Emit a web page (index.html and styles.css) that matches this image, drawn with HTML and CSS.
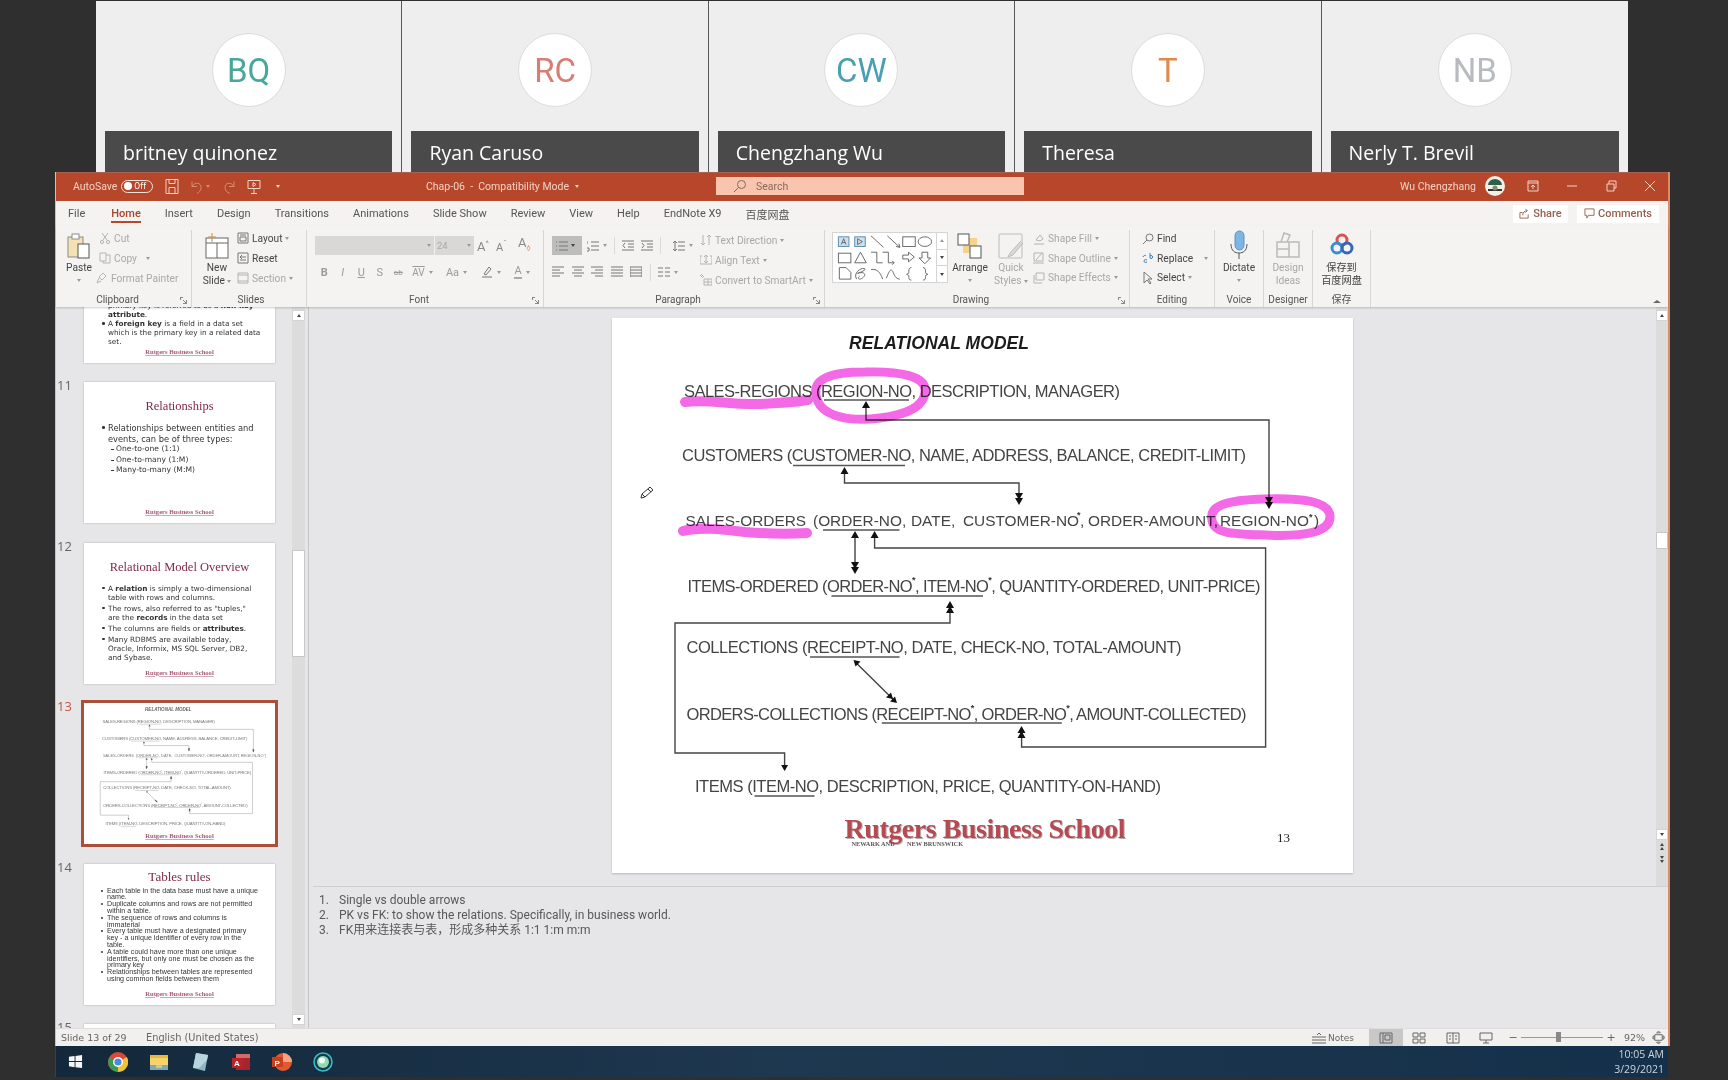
FILE: index.html
```html
<!DOCTYPE html>
<html lang="en">
<head>
    <meta charset="UTF-8">
    <meta name="viewport" content="width=device-width, initial-scale=1.0">
    <title>Chap-06 - Compatibility Mode</title>
    <link rel="stylesheet" href="styles.css">
</head>
<body>
    <!-- Meeting participants strip -->
    <div class="gallery">
        <div class="tile"><div class="avatar teal">BQ</div><div class="name-bar">britney quinonez</div></div>
        <div class="tile"><div class="avatar coral">RC</div><div class="name-bar">Ryan Caruso</div></div>
        <div class="tile"><div class="avatar blue">CW</div><div class="name-bar">Chengzhang Wu</div></div>
        <div class="tile"><div class="avatar orange">T</div><div class="name-bar">Theresa</div></div>
        <div class="tile"><div class="avatar grey">NB</div><div class="name-bar">Nerly T. Brevil</div></div>
    </div>

    <div class="window">
        <!-- Title bar -->
        <header class="titlebar">
            <div class="qat">
                <span class="autosave">AutoSave</span>
                <span class="toggle"><i></i>Off</span>
                <svg class="qat-icon save" viewBox="0 0 14 16"><path d="M1 1h12v14H1zM4 1v4h6V1M4 15V9h6v6"/></svg>
                <svg class="qat-icon dim" viewBox="0 0 14 16"><path d="M3 3v5h5M3 8c3-5 9-4 9 1 0 3-2 5-4 6"/></svg>
                <i class="caret dim-caret"></i>
                <svg class="qat-icon dim" viewBox="0 0 14 16"><path d="M11 3v5H6M11 8C8 3 2 4 2 9c0 3 2 5 5 6"/></svg>
                <svg class="qat-icon" viewBox="0 0 14 16"><path d="M1 2h12v8H1zM7 10v5M4 15h6M6 4l3 2-3 2z"/></svg>
                <i class="caret light-caret"></i>
            </div>
            <div class="doc-title">Chap-06 &nbsp;-&nbsp; Compatibility Mode <i class="caret light-caret"></i></div>
            <div class="search">
                <svg class="search-icon" viewBox="0 0 14 14"><circle cx="8.5" cy="5.5" r="4"/><path d="M5.5 8.5L1 13"/></svg>
                Search
            </div>
            <div class="title-right">
                <span class="user">Wu Chengzhang</span>
                <svg class="user-pic" viewBox="0 0 20 20"><circle cx="10" cy="10" r="10" fill="#f2efe6"/><path d="M3 9a7 6 0 0 1 14 0z" fill="#2e5f4c"/><path d="M3 13h14v2H3z" fill="#333"/><circle cx="10" cy="12" r="2.5" fill="#7d8c6c"/></svg>
                <svg class="win-btn first" viewBox="0 0 12 12"><path d="M1 1h10v10H1zM1 3h10M6 9V5M4 7l2-2 2 2"/></svg>
                <svg class="win-btn" viewBox="0 0 12 12"><path d="M1 6h10"/></svg>
                <svg class="win-btn" viewBox="0 0 12 12"><path d="M2 4h7v7H2zM4 4V1h7v7H9"/></svg>
                <svg class="win-btn" viewBox="0 0 12 12"><path d="M1 1l10 10M11 1L1 11"/></svg>
            </div>
        </header>

        <!-- Ribbon tabs -->
        <nav class="tabs">
            <span>File</span>
            <span class="active">Home</span>
            <span>Insert</span>
            <span>Design</span>
            <span>Transitions</span>
            <span>Animations</span>
            <span>Slide Show</span>
            <span>Review</span>
            <span>View</span>
            <span>Help</span>
            <span>EndNote X9</span>
            <span>百度网盘</span>
            <div class="tab-actions">
                <span class="tab-btn share"><svg viewBox="0 0 12 12"><path d="M1 5h3M1 5v6h9V7M4 8c0-3 2-5 5-5M7 1l2 2-2 2"/></svg>Share</span>
                <span class="tab-btn comments"><svg viewBox="0 0 12 12"><path d="M1 1h10v7H5L3 11V8H1z"/></svg>Comments</span>
            </div>
        </nav>

        <!-- Ribbon -->
        <div class="ribbon">
            <section class="group clipboard">
                <div class="group-body">
                    <div class="big-btn paste-btn">
                        <svg class="big-icon" viewBox="0 0 26 26"><rect x="2" y="4" width="15" height="20" fill="#f6e1b2" stroke="#8c8c8c"/><rect x="6" y="1" width="7" height="5" fill="#fff" stroke="#8c8c8c"/><rect x="12" y="11" width="11" height="14" fill="#fff" stroke="#555"/></svg>
                        <span>Paste</span>
                        <i class="caret"></i>
                    </div>
                    <div class="btn-col">
                        <div class="row-btn off"><svg class="sm-icon" viewBox="0 0 12 12"><path d="M3 1l5 7M9 1L4 8"/><circle cx="3" cy="10" r="1.6"/><circle cx="9" cy="10" r="1.6"/></svg>Cut</div>
                        <div class="row-btn off"><svg class="sm-icon" viewBox="0 0 12 12"><path d="M1 1h6v8H1zM4 9v2h7V3H7"/></svg>Copy <i class="caret caret-space"></i></div>
                        <div class="row-btn off painter"><svg class="sm-icon" viewBox="0 0 12 12"><path d="M7 1l3 3-4 4-3-3zM3 6l-2 5 4-2"/></svg>Format Painter</div>
                    </div>
                </div>
                <div class="group-label has-launcher">Clipboard <svg class="launcher" viewBox="0 0 7 7"><path d="M0 .5h3M.5 0v3M7 6.5H3M6.500 7V3M3 3l3 3"/></svg></div>
            </section>

            <section class="group slides">
                <div class="group-body">
                    <div class="big-btn new-slide">
                        <svg class="big-icon" viewBox="0 0 26 26"><rect x="2" y="5" width="22" height="20" fill="#fff" stroke="#666"/><path d="M2 10h22M13 10v15" fill="none" stroke="#666"/><path d="M8 0v9M4 4h8" stroke="#c98f3c" fill="none"/></svg>
                        <span>New</span>
                        <span>Slide <i class="caret"></i></span>
                    </div>
                    <div class="btn-col">
                        <div class="row-btn"><svg class="sm-icon" viewBox="0 0 12 12"><path d="M1 1h10v10H1zM3 3h6M3 5h6v4H3z"/></svg>Layout <i class="caret"></i></div>
                        <div class="row-btn"><svg class="sm-icon" viewBox="0 0 12 12"><path d="M1 1h10v10H1zM3 5h6M5 3L3 5l2 2M3 8h6"/></svg>Reset</div>
                        <div class="row-btn off"><svg class="sm-icon" viewBox="0 0 12 12"><path d="M1 1h10v10H1zM1 3h10M1 9h10"/></svg>Section <i class="caret"></i></div>
                    </div>
                </div>
                <div class="group-label slides-label">Slides</div>
            </section>

            <section class="group font">
                <div class="group-body stacked">
                    <div class="font-row">
                        <div class="font-box name-box"><i class="caret"></i></div>
                        <div class="font-box size-box">24<i class="caret"></i></div>
                        <span class="grow-btn">A<sup>^</sup></span>
                        <span class="grow-btn small">A<sup>ˇ</sup></span>
                        <span class="clear-btn">A<sub>◊</sub></span>
                    </div>
                    <div class="format-row">
                        <b class="fmt">B</b>
                        <i class="fmt">I</i>
                        <u class="fmt">U</u>
                        <span class="fmt">S</span>
                        <s class="fmt abc">ab</s>
                        <span class="fmt w30"><span class="av">AV</span><i class="caret"></i></span>
                        <span class="fmt w38">Aa <i class="caret"></i></span>
                        <span class="fmt w31"><svg class="sm-icon" viewBox="0 0 12 12"><path d="M3 8l5-7 2 2-5 6zM1 11h10"/></svg><i class="caret"></i></span>
                        <span class="fmt w31"><span class="a-under">A</span><i class="caret"></i></span>
                    </div>
                </div>
                <div class="group-label has-launcher">Font <svg class="launcher" viewBox="0 0 7 7"><path d="M0 .5h3M.5 0v3M7 6.500H3M6.500 7V3M3 3l3 3"/></svg></div>
            </section>

            <section class="group paragraph">
                <div class="group-body">
                    <div class="para-left stacked">
                        <div class="para-row">
                            <span class="list-btn"><svg class="sm-icon" viewBox="0 0 12 12"><path d="M0 2h1M3 2h9M0 6h1M3 6h9M0 10h1M3 10h9"/></svg><i class="caret dark"></i></span>
                            <span class="para-cell w26"><svg class="sm-icon" viewBox="0 0 12 12"><path d="M0 1v3M0 8h2v3H0M4 2h8M4 6h8M4 10h8"/></svg><i class="caret"></i></span>
                            <i class="para-sep"></i>
                            <svg class="sm-icon cell-icon" viewBox="0 0 12 12"><path d="M0 1h12M6 4h6M6 7h6M0 10h12M3 3L1 5.500l2 2.500"/></svg>
                            <svg class="sm-icon cell-icon" viewBox="0 0 12 12"><path d="M0 1h12M6 4h6M6 7h6M0 10h12M1 3l2 2.500L1 8"/></svg>
                            <i class="para-sep"></i>
                            <span class="para-cell w26"><svg class="sm-icon" viewBox="0 0 12 12"><path d="M5 2h7M5 6h7M5 10h7M2 1v10M0 3l2-2 2 2M0 9l2 2 2-2"/></svg><i class="caret"></i></span>
                        </div>
                        <div class="para-row second">
                            <svg class="sm-icon cell-icon" viewBox="0 0 12 12"><path d="M0 1h12M0 4h8M0 7h12M0 10h8"/></svg>
                            <svg class="sm-icon cell-icon" viewBox="0 0 12 12"><path d="M0 1h12M2 4h8M0 7h12M2 10h8"/></svg>
                            <svg class="sm-icon cell-icon" viewBox="0 0 12 12"><path d="M0 1h12M4 4h8M0 7h12M4 10h8"/></svg>
                            <svg class="sm-icon cell-icon" viewBox="0 0 12 12"><path d="M0 1h12M0 4h12M0 7h12M0 10h12"/></svg>
                            <svg class="sm-icon cell-icon" viewBox="0 0 12 12"><path d="M0 1v10M12 1v10M0 1h12M0 4h12M0 7h12M0 10h12"/></svg>
                            <i class="para-sep"></i>
                            <span class="para-cell"><svg class="sm-icon" viewBox="0 0 12 12"><path d="M0 2h5M7 2h5M0 6h5M7 6h5M0 10h5M7 10h5"/></svg><i class="caret"></i></span>
                        </div>
                    </div>
                    <div class="btn-col para-text">
                        <div class="row-btn off"><svg class="sm-icon" viewBox="0 0 12 12"><path d="M3 1v10M1 9l2 2 2-2M9 11V1M7 3l2-2 2 2"/></svg>Text Direction <i class="caret"></i></div>
                        <div class="row-btn off"><svg class="sm-icon" viewBox="0 0 12 12"><path d="M0 2h2M10 2h2M0 10h12M0 2v8M12 2v8M6 1v8M4 3l2-2 2 2M4 7l2 2 2-2"/></svg>Align Text <i class="caret"></i></div>
                        <div class="row-btn off"><svg class="sm-icon" viewBox="0 0 12 12"><path d="M4 5h8v6H4zM4 8h8M8 5v6M0 1l3 3M1 0l3 3"/></svg>Convert to SmartArt <i class="caret"></i></div>
                    </div>
                </div>
                <div class="group-label has-launcher">Paragraph <svg class="launcher" viewBox="0 0 7 7"><path d="M0 .5h3M.5 0v3M7 6.500H3M6.500 7V3M3 3l3 3"/></svg></div>
            </section>

            <section class="group drawing">
                <div class="group-body">
                    <div class="shapes">
                        <svg class="shapes-art" viewBox="0 0 104 51">
                            <rect class="box-tint" x="4" y="4" width="11" height="10"/><path d="M7 12l2.500-6 2.500 6M8 10h3"/>
                            <rect class="box-tint" x="21" y="4" width="11" height="10"/><path d="M24 6l5 3-5 3z"/>
                            <path d="M38 3l13 12M55 3l13 12M68 15l-4-1M68 15l-1-4"/>
                            <rect x="71" y="4" width="13" height="10"/><ellipse cx="94" cy="9" rx="7" ry="5"/>
                            <rect x="4" y="21" width="13" height="10"/><path d="M21 31l6-11 6 11zM38 20h6v11h6M50 20h6v11h6M62 31l-2-2M62 31l-2 2"/>
                            <path d="M71 23h6v-3l6 5-6 5v-3h-6zM91 20h6v6h3l-6 6-6-6h3z"/>
                            <path d="M5 48V36h7l5 5v7zM23 48c-4-6 4-12 8-11s-7 5-7 5c5-2 10 0 6 4s-7 1-4-1M38 38c6-1 10 3 12 10M54 47c3-8 5-11 7-6s4 7 7 7M80 36c-4 0-2 5-3 6l-2 1 2 1c1 1-1 5 3 5M92 36c4 0 2 5 3 6l2 1-2 1c-1 1 1 5-3 5"/>
                        </svg>
                        <div class="shape-scroll">
                            <span class="faded"><i class="caret up"></i></span>
                            <span><i class="caret dark"></i></span>
                            <span><i class="caret dark"></i></span>
                        </div>
                    </div>
                    <div class="big-btn arrange">
                        <svg class="big-icon" viewBox="0 0 26 26"><rect x="6" y="5" width="14" height="15" fill="#f6d28a"/><rect x="1" y="1" width="11" height="11" fill="#fff" stroke="#555"/><rect x="13" y="13" width="11" height="12" fill="#fff" stroke="#555"/></svg>
                        <span>Arrange</span>
                        <i class="caret"></i>
                    </div>
                    <div class="big-btn quick off">
                        <svg class="big-icon" viewBox="0 0 26 26"><rect x="1" y="1" width="23" height="24" rx="1" fill="#f4f3f2" stroke="#bbb"/><path d="M23 8L12 20l-2 4 5-2L25 10" fill="#d8d8d8" stroke="#bbb"/></svg>
                        <span>Quick</span>
                        <span>Styles <i class="caret"></i></span>
                    </div>
                    <div class="btn-col shape-cmds">
                        <div class="row-btn off"><svg class="sm-icon" viewBox="0 0 12 12"><path d="M3 7l4-5 3 4-3 2zM1 11h10"/></svg>Shape Fill <i class="caret"></i></div>
                        <div class="row-btn off"><svg class="sm-icon" viewBox="0 0 12 12"><path d="M1 1h9v8H1zM3 8l6-7M0 11h11"/></svg>Shape Outline <i class="caret"></i></div>
                        <div class="row-btn off"><svg class="sm-icon" viewBox="0 0 12 12"><path d="M3 1h8v7H3zM1 3v8h8"/></svg>Shape Effects <i class="caret"></i></div>
                    </div>
                </div>
                <div class="group-label has-launcher">Drawing <svg class="launcher" viewBox="0 0 7 7"><path d="M0 .5h3M.5 0v3M7 6.500H3M6.500 7V3M3 3l3 3"/></svg></div>
            </section>

            <section class="group editing">
                <div class="group-body">
                    <div class="btn-col">
                        <div class="row-btn"><svg class="sm-icon" viewBox="0 0 12 12"><circle cx="7.500" cy="4.500" r="3.500"/><path d="M5 7l-4 4"/></svg>Find</div>
                        <div class="row-btn"><svg class="sm-icon blue-ic" viewBox="0 0 12 12"><path d="M8 1v5M8 4a1.500 1.500 0 1 1 0 2M5 8c-2-1-3 0-3 1s1 2 3 1M1 5c1-2 2-2 3-1"/></svg>Replace <i class="caret caret-wide"></i></div>
                        <div class="row-btn"><svg class="sm-icon" viewBox="0 0 12 12"><path d="M2 0v11l3-3 3 4 1-1-3-4h4z"/></svg>Select <i class="caret"></i></div>
                    </div>
                </div>
                <div class="group-label">Editing</div>
            </section>

            <section class="group voice">
                <div class="group-body">
                    <div class="big-btn">
                        <svg class="big-icon tall" viewBox="0 0 20 30"><rect x="6" y="1" width="9" height="19" rx="4.500" fill="#7fb5e3" stroke="#5b93c5"/><path d="M2 14c0 7 4 9 8 9s8-2 8-9M10 23v6" fill="none" stroke="#555"/></svg>
                        <span>Dictate</span>
                        <i class="caret"></i>
                    </div>
                </div>
                <div class="group-label">Voice</div>
            </section>

            <section class="group designer">
                <div class="group-body">
                    <div class="big-btn off">
                        <svg class="big-icon tall" viewBox="0 0 26 30"><path d="M2 12h22v15H2zM2 19h12M14 12v15M6 12l3-9 6 2-3 7" fill="none" stroke="#bbb" stroke-width="1.500"/></svg>
                        <span>Design</span>
                        <span>Ideas</span>
                    </div>
                </div>
                <div class="group-label">Designer</div>
            </section>

            <section class="group baidu">
                <div class="group-body">
                    <div class="big-btn">
                        <svg class="big-icon tall" viewBox="0 0 26 30"><circle cx="13" cy="10" r="5" fill="none" stroke="#d8534f" stroke-width="3"/><circle cx="8" cy="18" r="5" fill="none" stroke="#3a8ed0" stroke-width="3"/><circle cx="18" cy="18" r="5" fill="none" stroke="#3567b5" stroke-width="3"/></svg>
                        <span>保存到</span>
                        <span>百度网盘</span>
                    </div>
                </div>
                <div class="group-label">保存</div>
            </section>

            <i class="caret up collapse"></i>
        </div>

        <!-- Slide sorter + editing area -->
        <div class="workspace">
            <aside class="thumbs">
                <div class="thumb-list">
                    <div class="thumb-row first-row">
                        <span class="num"></span>
                        <div class="thumb bottom-up">
                            <ul class="verdana-list">
                                <li class="no-dot">primary key is referred to as a <b>non-key<br>attribute</b>.</li>
                                <li>A <b>foreign key</b> is a field in a data set<br>which is the primary key in a related data<br>set.</li>
                            </ul>
                            <div class="thumb-foot">Rutgers Business School</div>
                        </div>
                    </div>
                    <div class="thumb-row">
                        <span class="num">11</span>
                        <div class="thumb">
                            <div class="thumb-title">Relationships</div>
                            <ul class="verdana-list roomy">
                                <li>Relationships between entities and<br>events, can be of three types:</li>
                                <li class="dash">One-to-one (1:1)</li>
                                <li class="dash">One-to-many (1:M)</li>
                                <li class="dash">Many-to-many (M:M)</li>
                            </ul>
                            <div class="thumb-foot">Rutgers Business School</div>
                        </div>
                    </div>
                    <div class="thumb-row">
                        <span class="num">12</span>
                        <div class="thumb">
                            <div class="thumb-title">Relational Model Overview</div>
                            <ul class="verdana-list tight">
                                <li>A <b>relation</b> is simply a two-dimensional<br>table with rows and columns.</li>
                                <li>The rows, also referred to as "tuples,"<br>are the <b>records</b> in the data set</li>
                                <li>The columns are fields or <b>attributes</b>.</li>
                                <li>Many RDBMS are available today,<br>Oracle, Informix, MS SQL Server, DB2,<br>and Sybase.</li>
                            </ul>
                            <div class="thumb-foot">Rutgers Business School</div>
                        </div>
                    </div>
                    <div class="thumb-row">
                        <span class="num current">13</span>
                        <div class="thumb selected">
                            <svg class="thumb-diagram" viewBox="612 318 741 500"><use href="#relmodel"/></svg>
                            <div class="thumb-foot">Rutgers Business School</div>
                        </div>
                    </div>
                    <div class="thumb-row">
                        <span class="num">14</span>
                        <div class="thumb">
                            <div class="thumb-title short">Tables rules</div>
                            <ul class="arial-list">
                                <li>Each table in the data base must have a unique<br>name.</li>
                                <li>Duplicate columns and rows are not permitted<br>within a table.</li>
                                <li>The sequence of rows and columns is<br>immaterial</li>
                                <li>Every table must have a designated primary<br>key - a unique identifier of every row in the<br>table.</li>
                                <li>A table could have more than one unique<br>identifiers, but only one must be chosen as the<br>primary key</li>
                                <li>Relationships between tables are represented<br>using common fields between them</li>
                            </ul>
                            <div class="thumb-foot">Rutgers Business School</div>
                        </div>
                    </div>
                    <div class="thumb-row">
                        <span class="num">15</span>
                        <div class="thumb"></div>
                    </div>
                </div>
                <div class="scrollbar left-bar">
                    <span class="sb-btn"><i class="caret up dark"></i></span>
                    <span class="sb-thumb"></span>
                    <span class="sb-btn sb-end"><i class="caret dark"></i></span>
                </div>
            </aside>

            <main class="editor">
                <div class="stage">
                    <div class="slide">
                        <svg class="diagram" viewBox="612 318 741 555">
                            <g id="relmodel">
                                <text class="slide-title" x="849" y="349" textLength="180">RELATIONAL MODEL</text>
                                <text class="row-text" x="684" y="397" textLength="436">SALES-REGIONS (REGION-NO, DESCRIPTION, MANAGER)</text>
                                <text class="row-text" x="682" y="460.500" textLength="564">CUSTOMERS (CUSTOMER-NO, NAME, ADDRESS, BALANCE, CREDIT-LIMIT)</text>
                                <text class="row-text row-tight" y="526"><tspan x="685.500">SALES-ORDERS</tspan> <tspan x="813">(ORDER-NO,</tspan> <tspan x="911">DATE,</tspan> <tspan x="963">CUSTOMER-NO</tspan><tspan class="star" x="1077" dy="-8">*</tspan><tspan x="1080" dy="8">,</tspan> <tspan x="1088">ORDER-AMOUNT,</tspan> <tspan x="1220">REGION-NO</tspan><tspan class="star" x="1309" dy="-6">*</tspan><tspan x="1314" dy="6">)</tspan></text>
                                <text class="row-text" x="687.500" y="591.500" textLength="573">ITEMS-ORDERED (ORDER-NO<tspan class="star" dy="-9">*</tspan><tspan dy="9">, ITEM-NO</tspan><tspan class="star" dy="-9">*</tspan><tspan dy="9">, QUANTITY-ORDERED, UNIT-PRICE)</tspan></text>
                                <text class="row-text" x="686.500" y="653" textLength="495">COLLECTIONS (RECEIPT-NO, DATE, CHECK-NO, TOTAL-AMOUNT)</text>
                                <text class="row-text" x="686.500" y="719.500" textLength="560">ORDERS-COLLECTIONS (RECEIPT-NO<tspan class="star" dy="-9">*</tspan><tspan dy="9">, ORDER-NO</tspan><tspan class="star" dy="-9">*</tspan><tspan dy="9">, AMOUNT-COLLECTED)</tspan></text>
                                <text class="row-text" x="695" y="791.500" textLength="466">ITEMS (ITEM-NO, DESCRIPTION, PRICE, QUANTITY-ON-HAND)</text>

                                <path class="rule" d="M824 400h85M793 465.500h112M823 530h76.500M831.500 596h151.500M810 657h89.500M881.800 723h180M754.500 796h60"/>
                                <path class="wire" d="M866 404v16h403v87M844.500 470v13h174.500v20M855 533v39M874.600 533v15h391v199h-244v-19M950 603v20H675v130h109.600v17M855 661.700L895.600 701.700"/>
                                <path class="head" d="M866 401l-4 7h8zM1269 509l-4-7h8zM1269 504l-4-7h8zM844.500 467l-4 7h8zM1019 505l-4-7h8zM1019 500l-4-7h8zM855 531l-4 7h8zM855 574l-4-7h8zM855 569l-4-7h8zM874.600 531l-4 7h8zM950 601l-4 7h8zM950 606l-4 7h8zM1021.500 726l-4 7h8zM1021.500 731l-4 7h8zM784.600 771l-3.500-6h7zM853.500 660l7 1.500-5 5zM897 703l-7-1.500 5-5zM893 699l-7-1.500 5-5z"/>
                            </g>
                            <text class="rutgers" x="844.500" y="838" textLength="281">Rutgers Business School</text>
                            <text class="rutgers-sub" x="851.500" y="846">NEWARK AND</text>
                            <text class="rutgers-sub" x="907" y="846">NEW BRUNSWICK</text>
                            <text class="page-num" x="1277" y="841.500">13</text>

                            <g class="ink">
                                <path class="ink-thick" d="M685 402C710 399 730 405 760 404 780 403 795 402 808 400"/>
                                <path d="M816 395C813 379 830 372 865 372 900 371 927 376 925 392 924 407 905 415 880 418 850 422 819 417 816 395Z"/>
                                <path class="ink-thick" d="M683 531C700 527 720 529 745 532 770 534 790 534 807 533"/>
                                <path d="M1212 520C1209 506 1225 500 1265 499 1300 498 1329 501 1330 516 1331 532 1305 537 1265 535 1235 534 1213 534 1212 520Z"/>
                            </g>
                        </svg>
                    </div>
                    <!-- annotation pen cursor -->
                    <svg class="pen" viewBox="0 0 16 16"><path d="M2 14l1-4 8-7 3 3-8 7zM3 10l3 3M9 5l3 3"/></svg>
                    <div class="scrollbar right-bar">
                        <span class="sb-btn"><i class="caret up dark"></i></span>
                        <span class="sb-thumb small-thumb"></span>
                        <span class="sb-btn sb-end"><i class="caret dark"></i></span>
                        <span class="sb-jump"><i class="caret up dark"></i><i class="caret up dark"></i></span>
                        <span class="sb-jump"><i class="caret dark"></i><i class="caret dark"></i></span>
                    </div>
                </div>
                <ol class="notes">
                    <li><span>1.</span>Single vs double arrows</li>
                    <li><span>2.</span>PK vs FK: to show the relations. Specifically, in business world.</li>
                    <li><span>3.</span>FK用来连接表与表，形成多种关系 1:1 1:m m:m</li>
                </ol>
            </main>
        </div>

        <!-- Status bar -->
        <footer class="statusbar">
            <span class="slide-count">Slide 13 of 29</span>
            <span class="lang">English (United States)</span>
            <div class="status-right">
                <svg class="st-icon notes-icon" viewBox="0 0 14 12"><path d="M5 3l2-2 2 2M0 5h14M0 8h14M0 11h14"/></svg>
                <span class="notes-label">Notes</span>
                <span class="view-btn current-view"><svg class="st-icon" viewBox="0 0 14 12"><path d="M1 1h12v10H1zM4 1v10M6 3h5v5H6z"/></svg></span>
                <span class="view-btn"><svg class="st-icon" viewBox="0 0 14 12"><path d="M1 1h5v4H1zM8 1h5v4H8zM1 7h5v4H1zM8 7h5v4H8z"/></svg></span>
                <span class="view-btn"><svg class="st-icon" viewBox="0 0 14 12"><path d="M1 1h12v10H1zM7 1v10M3 4h2M3 7h2M9 4h2M9 7h2"/></svg></span>
                <span class="view-btn last-view"><svg class="st-icon" viewBox="0 0 14 12"><path d="M1 1h12v7H1zM7 8v3M4 11h6"/></svg></span>
                <span class="zoom-sign">−</span>
                <span class="zoom-track"><i></i></span>
                <span class="zoom-sign">+</span>
                <span class="zoom-val">92%</span>
                <svg class="st-icon fit" viewBox="0 0 14 14"><path d="M3 4h8v6H3zM7 0L5 2h4zM7 14l-2-2h4zM0 7l2-2v4zM14 7l-2-2v4z"/></svg>
            </div>
        </footer>
    </div>

    <!-- Windows taskbar -->
    <div class="taskbar">
        <svg class="task-icon win" viewBox="0 0 16 16"><path d="M1 3l6-1v5.500H1zM8 2l7-1v6.500H8zM1 8.500h6V14l-6-1zM8 8.500h7V15l-7-1z"/></svg>
        <svg class="task-icon" viewBox="0 0 20 20"><circle cx="10" cy="10" r="10" fill="#d9483b"/><path d="M10 10L1.500 5A10 10 0 0 0 10 20z" fill="#3a9b52"/><path d="M10 10l8.800-5A10 10 0 0 1 10 20z" fill="#f1c232"/><circle cx="10" cy="10" r="5" fill="#fff"/><circle cx="10" cy="10" r="3.600" fill="#4a8be0"/></svg>
        <svg class="task-icon" viewBox="0 0 20 20"><path d="M1 3h18v15H1z" fill="#f5d36a"/><path d="M1 3h18v3H1z" fill="#e6b83f"/><path d="M1 13h18v5H1z" fill="#7fa8bc"/><path d="M7 13h6v3H7z" fill="#d8c77a"/></svg>
        <svg class="task-icon" viewBox="0 0 20 20"><path d="M6 1l12 2-3 16-12-3z" fill="#8eb5c6"/><path d="M6 1l12 2-1 5-8 8-6 0z" fill="#b7d3de"/></svg>
        <svg class="task-icon" viewBox="0 0 20 20"><path d="M5 2h14v16H5z" fill="#a4262c"/><path d="M5 2h14v4H5z" fill="#d06a6e"/><path d="M1 6h11v10H1z" fill="#b7242a"/><text class="task-letter" x="3" y="14">A</text></svg>
        <svg class="task-icon" viewBox="0 0 20 20"><circle cx="11" cy="10" r="9" fill="#e2592e"/><path d="M11 1a9 9 0 0 1 9 9h-9z" fill="#f2a488"/><path d="M0 5h11v10H0z" fill="#c7401d"/><text class="task-letter" x="2.500" y="13.500">P</text></svg>
        <svg class="task-icon" viewBox="0 0 20 20"><circle cx="10" cy="10" r="9" fill="#123c4d" stroke="#45b9c9" stroke-width="1.500"/><circle cx="10" cy="10" r="6" fill="#8fdcb4"/><circle cx="9" cy="8.500" r="3" fill="#f2fbf5"/></svg>
        <div class="clock"><span>10:05 AM</span><span>3/29/2021</span></div>
    </div>
</body>
</html>
```

FILE: styles.css
```css
* {
    margin: 0;
    padding: 0;
    box-sizing: border-box;
}

body {
    width: 1728px;
    height: 1080px;
    overflow: hidden;
    background: #302f2f;
    font-family: Roboto, "Noto Sans CJK SC", sans-serif;
    color: #444;
}

svg {
    display: block;
    flex: none;
}

/* Participants strip */
.gallery {
    display: grid;
    grid-template-columns: repeat(5, 1fr);
    width: 1532px;
    height: 172px;
    margin-left: 96px;
    padding-top: 1px;
}

.tile {
    display: flex;
    flex-direction: column;
    align-items: center;
    padding: 0 9px;
    background: #eeeeef;
    border-right: 1px solid #55585a;
}

.tile:last-child {
    border-right: 0;
}

.avatar {
    display: flex;
    align-items: center;
    justify-content: center;
    width: 74px;
    height: 74px;
    margin-top: 32px;
    border-radius: 50%;
    background: #fff;
    border: 1px solid #dcdcdc;
    font: 400 33px Roboto, sans-serif;
}

.teal { color: #47a79a; }
.coral { color: #d67d74; }
.blue { color: #4a9fb3; }
.orange { color: #e0894c; }
.grey { color: #b7bbc0; }

.name-bar {
    width: 100%;
    height: 41px;
    margin-top: auto;
    padding-left: 18px;
    background: #4b4a4b;
    color: #fff;
    font: 19.500px/43px "Open Sans", sans-serif;
}

/* PowerPoint window */
.window {
    display: flex;
    flex-direction: column;
    width: 1615px;
    height: 874px;
    margin-left: 55px;
    background: #e6e6e8;
    border-left: 1px solid #e8b9a4;
    border-right: 2px solid #d98c66;
}

.titlebar {
    display: flex;
    align-items: center;
    height: 29px;
    flex: none;
    padding-bottom: 2px;
    background: #b7472a;
    border-top: 1px solid #a8634c;
    color: #f2d2c6;
    font-size: 10.500px;
}

.qat {
    display: flex;
    align-items: center;
    width: 370px;
    padding-left: 17px;
}

.toggle {
    display: flex;
    align-items: center;
    gap: 2px;
    width: 32px;
    height: 13px;
    margin: 0 12px 0 4px;
    padding-left: 2px;
    border: 1px solid #f6e3dc;
    border-radius: 7px;
    font-size: 8.500px;
    color: #fff;
}

.toggle i {
    width: 8px;
    height: 8px;
    border-radius: 50%;
    background: #fff;
}

.qat-icon {
    width: 14px;
    height: 17px;
    margin-right: 12px;
    fill: none;
    stroke: #f2d2c6;
}

.qat-icon.save {
    margin-right: 10px;
}

.qat-icon.dim {
    stroke: #d98a70;
    margin-right: 3px;
}

.dim-caret + .qat-icon.dim {
    margin: 0 10px 0 13px;
}

.doc-title {
    width: 290px;
}

.qat .light-caret {
    margin-left: 0;
}

.search {
    display: flex;
    align-items: center;
    gap: 9px;
    width: 308px;
    height: 18px;
    padding-left: 17px;
    background: #f9c5af;
    color: #8a6a5c;
    font-size: 10.500px;
}

.search-icon {
    width: 14px;
    height: 14px;
    fill: none;
    stroke: #8a6a5c;
}

.title-right {
    display: flex;
    align-items: center;
    margin-left: auto;
}

.user {
    margin-right: 9px;
}

.user-pic {
    width: 20px;
    height: 20px;
    margin-right: 22px;
}

.win-btn {
    width: 12px;
    height: 12px;
    margin-left: 27px;
    fill: none;
    stroke: #f2d2c6;
}

.win-btn.first {
    margin-left: 0;
}

.win-btn:last-child {
    margin-right: 12px;
}

/* Tabs row */
.tabs {
    display: flex;
    align-items: center;
    gap: 24px;
    height: 25px;
    flex: none;
    padding-left: 12px;
    background: #f5f3f2;
    font-size: 11px;
    color: #555;
}

.tabs .active {
    position: relative;
    margin-left: 2px;
    color: #a5452d;
    font-weight: 500;
}

.tabs .active::after {
    content: "";
    position: absolute;
    left: 0;
    right: 0;
    bottom: -3px;
    height: 2px;
    background: #b7472a;
}

.tab-actions {
    display: flex;
    gap: 9px;
    margin-left: auto;
    margin-right: 9px;
}

.tab-btn {
    display: flex;
    align-items: center;
    justify-content: center;
    gap: 3px;
    height: 18px;
    background: #fff;
    color: #96604f;
    font-weight: 500;
    font-size: 11px;
}

.tab-btn svg {
    width: 11px;
    height: 11px;
    fill: none;
    stroke: #96604f;
}

.share { width: 55px; }
.comments { width: 82px; }

/* Ribbon */
.ribbon {
    position: relative;
    z-index: 2;
    display: flex;
    height: 81px;
    flex: none;
    background: #f5f3f2;
    box-shadow: 0 1px 2px rgba(0, 0, 0, 0.2);
    font-size: 10.200px;
}

.group {
    position: relative;
    display: flex;
    flex-direction: column;
    flex: none;
    border-right: 1px solid #d8d6d5;
    margin-top: 4px;
}

.clipboard { width: 136px; }
.slides { width: 115px; }
.font { width: 237px; }
.paragraph { width: 281px; }
.drawing { width: 305px; }
.editing { width: 85px; }
.voice { width: 49px; }
.designer { width: 49px; }
.baidu { width: 58px; }

.group-body {
    display: flex;
    flex: 1;
}

.group-label {
    height: 14px;
    line-height: 14px;
    text-align: center;
    color: #555;
    font-size: 10px;
}

.has-launcher {
    padding-right: 12px;
}

.slides-label {
    padding-left: 4px;
}

.launcher {
    position: absolute;
    right: 4px;
    bottom: 3px;
    width: 7px;
    height: 7px;
    fill: none;
    stroke: #888;
}

.off {
    color: #a8a8a8;
}

.caret {
    display: inline-block;
    width: 0;
    height: 0;
    border-left: 2.500px solid transparent;
    border-right: 2.500px solid transparent;
    border-top: 3px solid #9a9a9a;
    vertical-align: middle;
}

.caret.up {
    border-top: 0;
    border-bottom: 3px solid #9a9a9a;
}

.caret.dark { border-top-color: #444; }
.caret.up.dark { border-bottom-color: #444; }
.caret.light-caret { border-top-color: #f2d2c6; margin-left: 3px; }
.caret.dim-caret { border-top-color: #d98a70; }
.caret-space { margin-left: 6px; }
.caret-wide { margin-left: 8px; }

.sm-icon {
    width: 12px;
    height: 12px;
    fill: none;
    stroke: #777;
}

.off .sm-icon {
    stroke: #b4b4b4;
}

.blue-ic {
    stroke: #3a7fbe;
}

.big-btn {
    display: flex;
    flex-direction: column;
    align-items: center;
    line-height: 13px;
}

.big-icon {
    width: 26px;
    height: 26px;
    margin: 3px 0 2px;
}

.big-icon.tall {
    width: 26px;
    height: 30px;
    margin: 0 0 1px;
}

.big-btn .caret {
    margin-top: 5px;
}

.big-btn span .caret {
    margin-top: 0;
}

.btn-col {
    display: flex;
    flex-direction: column;
}

.row-btn {
    display: flex;
    align-items: center;
    gap: 3px;
    height: 20px;
    white-space: nowrap;
}

/* per-group spacing */
.paste-btn { width: 36px; margin-left: 5px; }
.clipboard .btn-col { margin: -2px 0 0 2px; }
.slides .btn-col { margin-top: -2px; }
.painter { margin-left: -3px; }
.new-slide { width: 40px; margin-left: 5px; }

.stacked {
    flex-direction: column;
    padding-top: 6px;
}

.font-row {
    display: flex;
    align-items: center;
    height: 19px;
    padding-left: 8px;
}

.font-box {
    display: flex;
    align-items: center;
    justify-content: flex-end;
    height: 19px;
    padding-right: 3px;
    background: #d9d8d7;
    color: #aaa;
    font-size: 9.500px;
}

.name-box { width: 120px; border-right: 1px solid #efefef; }
.size-box { width: 39px; justify-content: space-between; padding-left: 2px; }

.grow-btn,
.clear-btn {
    font-size: 13px;
    line-height: 13px;
    color: #888;
}

.grow-btn { margin-left: 3px; width: 19px; }
.grow-btn.small { font-size: 11px; margin-left: 0; width: 22px; }
.grow-btn sup { font-size: 8px; }
.clear-btn sub { font-size: 8px; color: #d79a8a; }

.format-row {
    display: flex;
    align-items: center;
    height: 20px;
    margin-top: 7px;
    padding-left: 8px;
    color: #9a9a9a;
}

.fmt {
    display: flex;
    align-items: center;
    justify-content: center;
    gap: 4px;
    width: 18.500px;
    font-size: 11px;
}

.abc { font-size: 8px; }
.av { font-size: 10px; text-decoration: overline; }
.w30 { width: 30px; }
.w38 { width: 38px; }
.w31 { width: 31px; }
.a-under { border-bottom: 2px solid #aaa; line-height: 12px; }

.para-left {
    width: 156px;
    padding-left: 8px;
}

.para-row {
    display: flex;
    align-items: center;
    height: 19px;
}

.para-row.second {
    height: 20px;
    margin-top: 7px;
    gap: 7.500px;
}

.list-btn {
    display: flex;
    align-items: center;
    gap: 3px;
    width: 31px;
    height: 19px;
    padding-left: 4px;
    background: #bdbdbc;
}

.para-cell {
    display: flex;
    align-items: center;
    gap: 4px;
}

.w26 { width: 28px; margin-left: 5px; }

.cell-icon {
    margin-right: 7px;
}

.second .cell-icon {
    margin: 0;
}

.para-sep {
    width: 1px;
    height: 17px;
    background: #dcdad9;
    margin-right: 7px;
}

.second .para-sep {
    margin-right: 0;
}

.shapes {
    display: flex;
    align-items: stretch;
    width: 116px;
    height: 51px;
    margin: 2px 0 0 7px;
    background: #fff;
    border: 1px solid #d4d4d4;
}

.shapes-art {
    width: 103px;
    height: 49px;
    fill: none;
    stroke: #666;
    stroke-width: 1;
}

.box-tint {
    fill: #cfe0ee;
    stroke: #5a8cae;
}

.shape-scroll {
    display: flex;
    flex-direction: column;
    width: 12px;
    border-left: 1px solid #d4d4d4;
}

.shape-scroll span {
    display: flex;
    flex: 1;
    align-items: center;
    justify-content: center;
    border-bottom: 1px solid #d4d4d4;
}

.shape-scroll span:last-child {
    border-bottom: 0;
}

.arrange {
    width: 44px;
}

.quick {
    width: 38px;
}

.shape-cmds {
    margin: -1px 0 0 3px;
}

.shape-cmds .row-btn,
.editing .row-btn {
    height: 19.500px;
}

.editing .btn-col {
    margin: -1px 0 0 12px;
}

.voice .big-btn,
.designer .big-btn,
.baidu .big-btn {
    width: 100%;
}

.collapse {
    position: absolute;
    right: 7px;
    bottom: 4px;
    border-left-width: 4px;
    border-right-width: 4px;
    border-bottom-width: 4px;
}

.caret.collapse {
    border-bottom-color: #666;
}

/* Workspace */
.workspace {
    display: flex;
    flex: 1;
    min-height: 0;
}

.thumbs {
    display: flex;
    width: 253px;
    flex: none;
    border-right: 1px solid #c4c4c4;
    padding-right: 3px;
}

.thumb-list {
    display: flex;
    flex-direction: column;
    gap: 19.400px;
    width: 236px;
    overflow: hidden;
}

.thumb-row {
    display: flex;
    flex: none;
}

.first-row {
    margin-top: -85px;
}

.num {
    width: 28px;
    height: 18px;
    margin-top: -6px;
    padding-left: 1px;
    font: 13px/18px "Open Sans", sans-serif;
    color: #666;
}

.num.current {
    color: #c0553c;
}

.thumb {
    display: flex;
    flex-direction: column;
    width: 191px;
    height: 141px;
    flex: none;
    padding-bottom: 7px;
    background: #fff;
    box-shadow: 0 0 2px rgba(0, 0, 0, 0.25);
    color: #333;
}

.thumb.selected {
    padding-bottom: 9px;
    outline: 3px solid #a94f3a;
    box-shadow: none;
}

.thumb-title {
    margin-top: 17px;
    text-align: center;
    font: 12.500px/15px "Liberation Serif", serif;
    color: #7e2a44;
}

.thumb-title.short {
    margin-top: 5px;
    font-size: 13px;
}

.verdana-list {
    list-style: none;
    margin-top: 9px;
    padding-left: 24px;
    font: 7.300px/9px "DejaVu Sans", sans-serif;
    white-space: nowrap;
}

.bottom-up .verdana-list {
    margin: auto 0 2px;
}

.verdana-list.roomy {
    margin-top: 9px;
    font-size: 8.300px;
}

.verdana-list.roomy li {
    line-height: 10.500px;
}

.verdana-list.roomy li.dash {
    font-size: 7.600px;
}

.verdana-list.tight li {
    margin-bottom: 2px;
}

.verdana-list li,
.arial-list li {
    position: relative;
}

.verdana-list li::before,
.arial-list li::before {
    content: "";
    position: absolute;
    left: -6px;
    top: 3px;
    width: 2.500px;
    height: 2.500px;
    border-radius: 50%;
    background: #333;
}

.verdana-list li.no-dot::before {
    display: none;
}

.verdana-list li.dash {
    padding-left: 8px;
}

.verdana-list li.dash::before {
    left: 3px;
    top: 5px;
    width: 3px;
    height: 1px;
    border-radius: 0;
}

.arial-list {
    list-style: none;
    margin-top: 4px;
    padding-left: 23px;
    font: 7.150px/6.800px "Liberation Sans", sans-serif;
    white-space: nowrap;
}

.arial-list li::before {
    left: -6px;
    top: 2px;
    width: 2px;
    height: 2px;
}

.thumb-foot {
    margin-top: auto;
    text-align: center;
    font: bold 6.600px/8px "Liberation Serif", serif;
    color: #a85c74;
    text-decoration: underline;
    text-decoration-color: #cfa9b6;
}

.bottom-up .thumb-foot {
    margin-top: 0;
}

.thumb-diagram {
    width: 191px;
    height: 129px;
    opacity: 0.72;
}

.scrollbar {
    display: flex;
    flex-direction: column;
    align-items: stretch;
    width: 13px;
    flex: none;
    background: #dcdcdd;
}

.sb-btn {
    display: flex;
    align-items: center;
    justify-content: center;
    height: 11px;
    background: #fff;
    border: 1px solid #d4d4d4;
}

.sb-thumb {
    background: #fff;
    border: 1px solid #c8c8c8;
}

.left-bar {
    padding-top: 3px;
    padding-bottom: 3px;
}

.left-bar .sb-thumb {
    height: 107px;
    margin-top: 229px;
}

.sb-end {
    margin-top: auto;
}

.editor {
    display: flex;
    flex-direction: column;
    flex: 1;
    min-width: 0;
}

.stage {
    position: relative;
    display: flex;
    height: 579px;
    flex: none;
}

.slide {
    width: 741px;
    height: 555px;
    margin: 11px 0 0 303px;
    background: #fff;
    box-shadow: 0 1px 2px rgba(0, 0, 0, 0.2);
}

.diagram {
    width: 741px;
    height: 555px;
}

.slide-title {
    font: italic bold 17.500px "Liberation Sans", sans-serif;
    fill: #1c1c1c;
}

.row-text {
    font: 16.500px "Liberation Sans", sans-serif;
    fill: #444;
}

.row-text.row-tight {
    font-size: 15.400px;
}

.star {
    font: bold 9px "Liberation Sans", sans-serif;
    fill: #333;
}

.rule {
    fill: none;
    stroke: #555;
    stroke-width: 1.300;
}

.wire {
    fill: none;
    stroke: #444;
    stroke-width: 1.400;
}

.head {
    fill: #111;
}

.rutgers {
    font: bold 28px "Liberation Serif", serif;
    fill: #b54a52;
    filter: drop-shadow(1px 1px 0 #b9b3b3);
}

.rutgers-sub {
    font: bold 6.300px "Liberation Serif", serif;
    fill: #555;
}

.page-num {
    font: 13px "Liberation Serif", serif;
    fill: #222;
}

.ink {
    fill: none;
    stroke: #f46ae6;
    stroke-width: 9;
    stroke-linecap: round;
    mix-blend-mode: multiply;
}

.ink-thick {
    stroke-width: 10;
}

.pen {
    position: absolute;
    left: 330px;
    top: 177px;
    width: 16px;
    height: 16px;
    fill: #fff;
    stroke: #333;
    stroke-width: 1;
}

.right-bar {
    width: 12px;
    margin-left: auto;
    padding: 3px 0 20px;
}

.right-bar .small-thumb {
    height: 17px;
    margin-top: 211px;
}

.sb-jump {
    display: flex;
    flex-direction: column;
    align-items: center;
    justify-content: center;
    gap: 1px;
    height: 13px;
}

.notes {
    list-style: none;
    flex: 1;
    margin-left: 4px;
    padding: 6px 0 0 6px;
    border-top: 1px solid #cfcfd0;
    font: 12px/15px Roboto, "Noto Sans CJK SC", sans-serif;
    color: #585858;
}

.notes span {
    display: inline-block;
    width: 20px;
}

/* Status bar */
.statusbar {
    display: flex;
    align-items: center;
    height: 18px;
    flex: none;
    padding-left: 5px;
    background: #f1f0ef;
    border-top: 1px solid #dedede;
    font: 9.500px "DejaVu Sans", sans-serif;
    color: #666;
    white-space: nowrap;
}

.lang {
    margin-left: 0;
    font-size: 9.800px;
}

.slide-count {
    width: 85px;
}

.status-right {
    display: flex;
    align-items: center;
    height: 100%;
    margin-left: auto;
}

.st-icon {
    width: 14px;
    height: 12px;
    fill: none;
    stroke: #666;
}

.notes-label {
    width: 41px;
    margin-left: 2px;
    font-size: 9px;
}

.view-btn {
    display: flex;
    align-items: center;
    justify-content: center;
    width: 33.500px;
    height: 100%;
}

.last-view {
    margin-right: 2px;
}

.current-view {
    background: #c8c8c8;
}

.zoom-sign {
    width: 16px;
    text-align: center;
    font-size: 11px;
}

.zoom-track {
    position: relative;
    width: 82px;
    height: 1px;
    background: #999;
}

.zoom-track i {
    position: absolute;
    left: 35px;
    top: -5px;
    width: 5px;
    height: 10px;
    background: #888;
}

.zoom-val {
    width: 32px;
    margin-left: 1px;
    padding-left: 4px;
    font-size: 9.500px;
}

.fit {
    width: 13px;
    height: 13px;
    margin-right: 3px;
}

/* Windows taskbar */
.taskbar {
    display: flex;
    align-items: center;
    gap: 21px;
    width: 1613px;
    height: 31px;
    margin-left: 55px;
    padding-left: 12px;
    background: linear-gradient(90deg, #13283a, #1e3850 45%, #1b344d 70%, #14304a);
    border-left: 1px solid #4a3a36;
}

.task-icon {
    width: 20px;
    height: 20px;
}

.task-icon.win {
    width: 15px;
    height: 15px;
    margin-right: 4px;
    fill: #f4f6f8;
}

.task-letter {
    font: bold 8px "Liberation Sans", sans-serif;
    fill: #fff;
}

.clock {
    display: flex;
    flex-direction: column;
    align-items: flex-end;
    margin-left: auto;
    padding: 1px 4px 0 0;
    font: 10.500px/15px "Open Sans", sans-serif;
    color: #cdd6de;
}
```
